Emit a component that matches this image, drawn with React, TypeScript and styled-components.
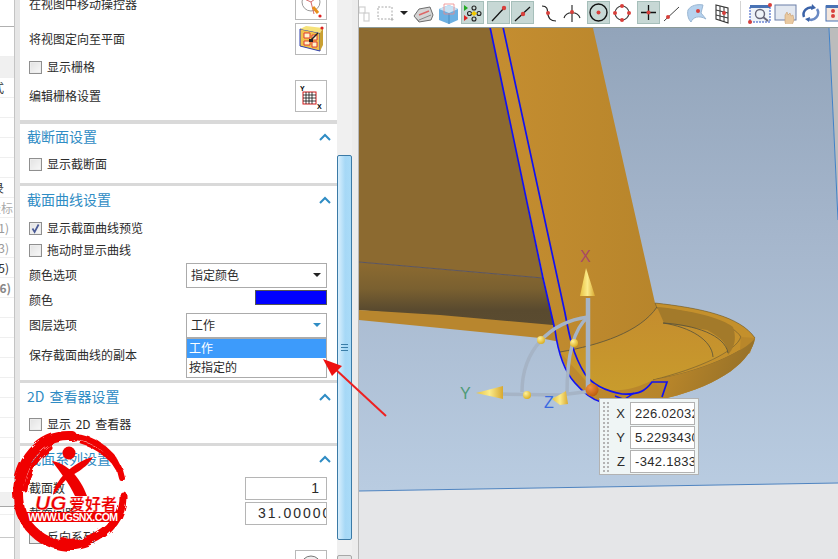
import React from 'react';
import styled, { createGlobalStyle } from 'styled-components';

const Global = createGlobalStyle`
  html, body { margin: 0; padding: 0; background: #e8e8e8; overflow: hidden; }
  * { box-sizing: border-box; }
`;

const Page = styled.div`
  position: relative;
  display: flex;
  width: 838px;
  height: 559px;
  overflow: hidden;
  background: #e8e8e8;
  font-family: "Noto Sans CJK SC", "Liberation Sans", sans-serif;
  font-size: 12px;
  word-spacing: 2px;
  color: #2b2b2b;
`;

/* clipped table at far left */
const Strip = styled.div`
  width: 15px;
  flex: none;
  background: #fff;
  border-right: 1px solid #c4c4c4;
  overflow: hidden;
`;
const StripRow = styled.div<{ $h: number; $bg?: string; $c?: string; $bold?: boolean; $line?: string; $pr?: number }>`
  height: ${(p) => p.$h}px;
  display: flex;
  justify-content: flex-end;
  align-items: center;
  padding-right: ${(p) => p.$pr || 0}px;
  white-space: nowrap;
  background: ${(p) => p.$bg || '#fff'};
  color: ${(p) => p.$c || '#333'};
  font-weight: ${(p) => (p.$bold ? 700 : 400)};
  border-bottom: 1px solid ${(p) => p.$line || '#efefef'};
`;
const StripGap = styled.div`
  width: 5px;
  flex: none;
  background: #e6e6e6;
`;

const Panel = styled.div`
  width: 317px;
  flex: none;
  height: 559px;
  background: #fff;
`;
const Section = styled.section<{ $first?: boolean; $pb: number; $bw?: number }>`
  position: relative;
  padding: 0 10px ${(p) => p.$pb}px 9px;
  margin-top: ${(p) => (p.$first ? -12 : 0)}px;
  border-bottom: ${(p) => p.$bw ?? 3}px solid #d9d9d9;
`;
const SectionHead = styled.div<{ $h: number }>`
  height: ${(p) => p.$h}px;
  display: flex;
  align-items: center;
  justify-content: space-between;
  margin-left: -2px;
  margin-right: -4px;
  font-size: 14px;
  color: #2f8cc4;
  & > span { margin-bottom: 2px; }
`;
const Row = styled.div<{ $h: number; $mt?: number }>`
  height: ${(p) => p.$h}px;
  margin-top: ${(p) => p.$mt || 0}px;
  display: flex;
  align-items: center;
  justify-content: space-between;
  white-space: nowrap;
  & > span { margin-bottom: 2px; }
`;
const CheckLabel = styled.div`
  display: flex;
  align-items: center;
  gap: 5px;
  & > em { font-style: normal; margin-bottom: 2px; }
`;
const Box = styled.span`
  width: 13px;
  height: 13px;
  flex: none;
  display: flex;
  border: 1px solid #8f8f8f;
  background: linear-gradient(135deg, #e2e2e2, #f8f8f8);
  box-shadow: inset 0 0 0 1px #ededed;
`;
const IconButton = styled.div`
  width: 32px;
  height: 32px;
  flex: none;
  display: flex;
  align-items: center;
  justify-content: center;
  border: 1px solid #b9b9b9;
  background: #fff;
  overflow: hidden;
`;
const Select = styled.div`
  position: relative;
  width: 141px;
  height: 25px;
  display: flex;
  align-items: center;
  justify-content: space-between;
  padding: 0 5px 2px 4px;
  border: 1px solid #ababab;
  background: #fff;
`;
const Caret = styled.span<{ $color: string }>`
  width: 0;
  height: 0;
  border-left: 4px solid transparent;
  border-right: 4px solid transparent;
  border-top: 4px solid ${(p) => p.$color};
`;
const Menu = styled.div`
  position: absolute;
  z-index: 3;
  top: 23px;
  left: -1px;
  width: 141px;
  height: 41px;
  background: #fff;
  border: 1px solid #ababab;
  border-top: 2px solid #ababab;
`;
const MenuItem = styled.div<{ $on?: boolean }>`
  height: 19px;
  line-height: 18px;
  padding-left: 2px;
  background: ${(p) => (p.$on ? '#3d9bfb' : '#fff')};
  color: ${(p) => (p.$on ? '#fff' : '#2b2b2b')};
`;
const Swatch = styled.div`
  width: 72px;
  height: 15px;
  margin-bottom: 6px;
  background: #0000ff;
  border: 1px solid #555;
`;
const NumField = styled.div`
  width: 82px;
  height: 23px;
  border: 1px solid #b5b5b5;
  background: #fff;
  font-family: "Liberation Sans", sans-serif;
  font-size: 14px;
  letter-spacing: 2px;
  line-height: 21px;
  overflow: hidden;
  white-space: nowrap;
`;
const NumRight = styled(NumField)`
  text-align: right;
  padding-right: 5px;
`;
const NumLeft = styled(NumField)`
  padding-left: 12px;
`;

/* scrollbar */
const ScrollTrack = styled.div`
  width: 15px;
  flex: none;
  background: #f0f0f0;
  display: flex;
  flex-direction: column;
  padding-top: 155px;
`;
const ScrollThumb = styled.div`
  height: 385px;
  flex: none;
  border: 1px solid #3b7aa6;
  border-radius: 2px;
  background: linear-gradient(90deg, #d9effd, #a6d8f6 55%, #a9dbf8);
  display: flex;
  align-items: center;
  justify-content: center;
`;
const ScrollGrip = styled.div`
  width: 7px;
  height: 7px;
  background: repeating-linear-gradient(180deg, #3a7ea8 0 1px, transparent 1px 3px);
`;
const ScrollEnd = styled.div`
  height: 10px;
  flex: none;
  margin-top: 15px;
  border: 1px solid #a8a8a8;
  background: #e4e4e4;
  border-radius: 2px;
`;
const Divider = styled.div`
  width: 7px;
  flex: none;
  background: #ececec;
  border-right: 1px solid #b8b8b8;
`;

/* right side */
const Work = styled.div`
  position: relative;
  flex: 1;
  display: flex;
  flex-direction: column;
  min-width: 0;
`;
const Toolbar = styled.div`
  height: 28px;
  flex: none;
  display: flex;
  align-items: flex-start;
  background: #fff;
  border-bottom: 1px solid #8c9a98;
  overflow: hidden;
`;
const Tool = styled.div<{ $w: number; $ml?: number; $on?: boolean }>`
  width: ${(p) => p.$w}px;
  height: 23px;
  flex: none;
  margin-top: 1px;
  margin-left: ${(p) => p.$ml || 0}px;
  display: flex;
  align-items: center;
  justify-content: center;
  background: ${(p) => (p.$on ? '#c7d8d5' : 'transparent')};
  border: ${(p) => (p.$on ? '1px solid #a6bfba' : 'none')};
`;
const ToolSep = styled.div`
  width: 1px;
  height: 23px;
  flex: none;
  margin: 1px 7px 0 7px;
  background: #d4d4d4;
`;
const Viewport = styled.svg`
  display: block;
  width: 479px;
  height: 531px;
`;
const CoordBox = styled.div`
  position: absolute;
  left: 240px;
  top: 398px;
  width: 100px;
  height: 77px;
  display: flex;
  background: #eff5f5;
  border: 1px solid #b2b2b2;
`;
const Grip = styled.div`
  width: 8px;
  margin: 2px 0 2px 2px;
  background-image: radial-gradient(circle, #b4b4b4 1.2px, transparent 1.3px);
  background-size: 4px 4px;
`;
const CoordRows = styled.div`
  flex: 1;
  display: flex;
  flex-direction: column;
  gap: 1px;
  padding: 3px 3px 0 0;
`;
const CoordRow = styled.div`
  display: flex;
  justify-content: flex-end;
  align-items: center;
  gap: 5px;
  font-family: "Liberation Sans", sans-serif;
  font-size: 13px;
`;
const CoordInput = styled.div`
  width: 65px;
  height: 23px;
  padding-left: 4px;
  line-height: 21px;
  background: #fff;
  border: 1px solid #b2b2b2;
  overflow: hidden;
  white-space: nowrap;
  letter-spacing: 0.3px;
`;

const Overlay = styled.svg`
  position: absolute;
  z-index: 5;
  left: 0;
  top: 0;
  pointer-events: none;
`;

const Chevron = () => (
  <svg width="12" height="8" viewBox="0 0 12 8"><path d="M1 7 6 2l5 5" fill="none" stroke="#2f8cc4" strokeWidth="2" /></svg>
);
const Tick = () => (
  <svg width="11" height="11" viewBox="0 0 11 11"><path d="M2.5 5.5 4.6 9 8.6 1.5" fill="none" stroke="#4a5a96" strokeWidth="1.7" /></svg>
);

const Check = ({ on, children }: { on?: boolean; children: React.ReactNode }) => (
  <CheckLabel><Box>{on && <Tick />}</Box><em>{children}</em></CheckLabel>
);

const RED = '#d8403c';
const Dot = ({ x, y, r = 2 }: { x: number; y: number; r?: number }) => <circle cx={x} cy={y} r={r} fill={RED} />;
const Ico = ({ children, w = 22, h = 22 }: { children: React.ReactNode; w?: number; h?: number }) => (
  <svg width={w} height={h} viewBox={`0 0 ${w} ${h}`}>{children}</svg>
);

const tools: { w: number; ml?: number; on?: boolean; icon?: React.ReactNode }[] = [
  { w: 15, icon: <Ico w={15}><g fill="none" stroke="#d0d0d0" strokeWidth="1.2"><rect x="0" y="5" width="6" height="6" /><rect x="5" y="11" width="5" height="8" /></g></Ico> },
  { w: 22, ml: 1, icon: <Ico><rect x="3" y="5" width="14" height="12" fill="none" stroke="#a8a8a8" strokeDasharray="2 1.5" /><path d="M17 16v3M15.500 17.500h3" stroke="#b8b8b8" /></Ico> },
  { w: 10, ml: 2, icon: <Ico w={10}><path d="M1 9h8l-4 4z" fill="#222" /></Ico> },
  { w: 24, ml: 2, icon: <Ico w={24}><path d="M3 14 8 7l11-2 3 8-2 5-12 2z" fill="#d4d4d4" stroke="#6e6e6e" /><path d="M8 13 18 9" stroke="#d66" strokeWidth="1.5" /><path d="M5 16l3 3M8 18l12-5" stroke="#888" fill="none" /></Ico> },
  { w: 23, ml: 2, icon: <Ico w={23}><path d="M2 7 12 3l9 4v11l-9 4-10-4z" fill="#6cb0e2" /><path d="M2 7l10 4 9-4-9-4z" fill="#c8e2f4" /><path d="M12 11v11" stroke="#4a8cc0" /><path d="M7 2h10v10H7z" fill="none" stroke="#e88" strokeWidth=".8" /></Ico> },
  { w: 23, ml: 1, on: true, icon: <Ico w={21}><path d="M2 3l4 3-4 3z" fill="#2a2" /><path d="M2 13l4 3-4 3z" fill="#d22" /><g fill="none" stroke="#222" strokeWidth="1.1"><circle cx="12" cy="6" r="2" /><circle cx="12" cy="17" r="2" /><circle cx="7.500" cy="11.500" r="2" /><circle cx="17" cy="11.500" r="2" /></g><path d="M12 9l3 2.500-3 2.500-3-2.500z" fill="#f0c800" /></Ico> },
  { w: 23, ml: 3, on: true, icon: <Ico w={21}><path d="M4 19 17 5" stroke="#111" strokeWidth="1.2" /><Dot x={16} y={6} r={2.2} /></Ico> },
  { w: 23, ml: 1, on: true, icon: <Ico w={21}><path d="M3 19 18 5" stroke="#111" strokeWidth="1.2" /><Dot x={11} y={12} r={2.2} /></Ico> },
  { w: 22, ml: 4, icon: <Ico><path d="M4 4c7 0 5 6 6 9s2 6 8 6" fill="none" stroke="#222" strokeWidth="1.2" /><Dot x={10} y={11} r={2} /></Ico> },
  { w: 22, ml: 1, icon: <Ico><path d="M3 16c2-7 14-7 16 0M11 3v17" fill="none" stroke="#222" strokeWidth="1.1" /><Dot x={11} y={10} r={2} /></Ico> },
  { w: 23, ml: 4, on: true, icon: <Ico w={21}><circle cx="10.500" cy="10.500" r="8.500" fill="none" stroke="#111" strokeWidth="1.4" /><Dot x={10.5} y={10.5} r={2} /></Ico> },
  { w: 22, ml: 1, icon: <Ico><circle cx="11" cy="11" r="7" fill="none" stroke="#444" strokeWidth="1.1" /><Dot x={11} y={4} /><Dot x={11} y={18} /><Dot x={4} y={11} /><Dot x={18} y={11} /></Ico> },
  { w: 23, ml: 4, on: true, icon: <Ico w={21}><path d="M3 10.500h15M10.500 3v15" stroke="#111" strokeWidth="1.3" /><Dot x={10.5} y={10.5} r={2} /></Ico> },
  { w: 22, ml: 1, icon: <Ico><path d="M3 19 18 5" stroke="#444" /><Dot x={7} y={15} r={2} /></Ico> },
  { w: 24, ml: 2, icon: <Ico w={24}><path d="M3 8c3-5 10-6 15-5l-2 8 5 6c-7-4-13-2-15 3-3-3-4-8-3-12z" fill="#b6d2ee" stroke="#9ab6d2" /><Dot x={13} y={9} r={2} /></Ico> },
  { w: 22, ml: 2, icon: <Ico><path d="M5 3l12 3v15L5 17z" fill="none" stroke="#333" strokeWidth="1.1" /><path d="M9 4v14M13 5v15M5 8l12 3M5 13l12 3" stroke="#333" /><Dot x={13} y={11} r={2} /></Ico> },
];
const tools2: { w: number; ml?: number; icon: React.ReactNode }[] = [
  { w: 24, icon: <Ico w={24}><rect x="2" y="4" width="20" height="16" fill="#eef3f8" stroke="#2a4fc0" strokeDasharray="2 1" /><rect x="2" y="3" width="20" height="3" fill="#4872b4" /><circle cx="12" cy="12" r="4.500" fill="none" stroke="#667" strokeWidth="1.4" /><path d="M15 15l5 4" stroke="#667" strokeWidth="2" /><Dot x={2} y={20} /><Dot x={22} y={3} /></Ico> },
  { w: 24, ml: 2, icon: <Ico w={24}><rect x="1" y="3" width="21" height="15" fill="#e3e8f0" stroke="#6b7fa8" /><path d="M11 20v-7l2-3 1 3 2-2 1 3 2-1 1 5-2 5h-6z" fill="#e9c9a0" stroke="#c9a070" strokeWidth=".6" /></Ico> },
  { w: 23, ml: 1, icon: <Ico w={23}><path d="M5 15a7 7 0 0 1 9-9" fill="none" stroke="#3b63a8" strokeWidth="2.500" /><path d="M18 7a7 7 0 0 1-9 10" fill="none" stroke="#6a8ac4" strokeWidth="2.500" /><path d="M13 2l4 4-5 2zM10 20l-4-3 5-2z" fill="#3b63a8" /></Ico> },
  { w: 15, ml: 3, icon: <Ico w={15}><rect x="1" y="4" width="20" height="15" fill="#f4e6dc" stroke="#4872b4" /><rect x="1" y="3" width="20" height="3" fill="#4872b4" /><Dot x={8} y={9} /><Dot x={8} y={14} /></Ico> },
];

const Strokes = () => (
  <g>
    <path d="M490 27 543 278 555 330C558 352 565 372 575 383 582 391 590 399 601 402 M503 27 565 313C569 335 573 355 585 374 592 384 606 391 622 394 640 395 646 390 652 382H667L662 397" fill="none" stroke="#1212f0" strokeWidth="1.700" />
    <path d="M615 396 628 401M622 401 634 393" fill="none" stroke="#1212f0" strokeWidth="1.500" />
  </g>
);

const Bell = () => (
  <>
    <defs>
      <linearGradient id="sky" x1="0" y1="28" x2="0" y2="490" gradientUnits="userSpaceOnUse">
        <stop offset="0" stopColor="#92a4ba" /><stop offset=".45" stopColor="#a5b6cc" /><stop offset="1" stopColor="#b9cce1" />
      </linearGradient>
      <linearGradient id="band" x1="0" y1="265" x2="0" y2="325" gradientUnits="userSpaceOnUse">
        <stop offset="0" stopColor="#8b6a30" /><stop offset=".4" stopColor="#7a6030" /><stop offset=".75" stopColor="#594a2f" /><stop offset="1" stopColor="#5a4b30" />
      </linearGradient>
      <linearGradient id="shaft" x1="500" y1="0" x2="660" y2="0" gradientUnits="userSpaceOnUse">
        <stop offset="0" stopColor="#c48d30" /><stop offset="1" stopColor="#b7852b" />
      </linearGradient>
      <linearGradient id="foot" x1="0" y1="310" x2="0" y2="400" gradientUnits="userSpaceOnUse">
        <stop offset="0" stopColor="#c48d2e" /><stop offset="1" stopColor="#c99d2c" />
      </linearGradient>
      <linearGradient id="under" x1="660" y1="350" x2="760" y2="390" gradientUnits="userSpaceOnUse">
        <stop offset="0" stopColor="#c08a2a" /><stop offset="1" stopColor="#8e6c28" />
      </linearGradient>
      <linearGradient id="cone" x1="0" y1="0" x2="1" y2="0">
        <stop offset="0" stopColor="#e8c240" /><stop offset=".5" stopColor="#fbeb8a" /><stop offset="1" stopColor="#d8a830" />
      </linearGradient>
      <radialGradient id="ball" cx=".35" cy=".3" r=".8">
        <stop offset="0" stopColor="#fff29a" /><stop offset="1" stopColor="#d8a818" />
      </radialGradient>
      <radialGradient id="ballO" cx=".35" cy=".3" r=".8">
        <stop offset="0" stopColor="#f09040" /><stop offset="1" stopColor="#b85808" />
      </radialGradient>
    </defs>
    <rect x="359" y="28" width="479" height="531" fill="#e5e6e8" />
    <path d="M359 28H829L838 220V483L359 491Z" fill="url(#sky)" />
    <path d="M829 28H838V220Z" fill="#bcbcbc" />
    <path d="M829 28 838 220" stroke="#3f80c8" fill="none" />
    <path d="M359 491 838 483" stroke="#4f84c0" strokeWidth="1" fill="none" />
    {/* body */}
    <path d="M359 28H490L543 278 359 262Z" fill="#8c6a30" />
    <path d="M359 262 543 278 557 330 490 322 359 310Z" fill="url(#band)" />
    <path d="M359 310 440 315 553 325 560 342 540 338 440 328 359 320Z" fill="#b8862e" />
    <path d="M359 262 543 278" stroke="#5b5560" fill="none" />
    {/* shaft and foot */}
    <path d="M490 28H593L655 303C700 308 740 316 755 338 752 360 722 385 667 398L600 402C575 390 562 370 555 330Z" fill="url(#shaft)" />
    <path d="M560 352C600 345 640 332 657 307 700 312 735 322 740 337 735 355 690 372 653 380 630 392 600 396 585 380Z" fill="url(#foot)" />
    <path d="M655 303C700 308 740 316 755 338 745 352 700 372 653 380 700 368 735 352 741 337 733 324 700 312 657 308Z" fill="#c4902c" stroke="#6b5a30" strokeWidth=".6" />
    <path d="M741 337 755 338 750 353 727 366 740 350Z" fill="#b9872a" />
    <path d="M653 380C700 372 745 352 755 338 752 360 722 385 667 398Z" fill="url(#under)" />
    <path d="M733 327C722 318 690 310 657 307L664 323 707 330C722 338 728 345 728 355 732 350 738 342 733 327Z" fill="#a37a2a" />
    <path d="M663 323C690 327 712 340 713 357M663 323C695 325 725 335 728 353M560 352C600 345 640 332 657 307" fill="none" stroke="#54503c" strokeWidth=".8" />
    <Strokes />
    {/* manipulator */}
    <g fill="none" stroke="#a6b4c6">
      <path d="M588 317C550 322 522 350 522 392" strokeWidth="3.500" />
      <path d="M588 317C572 330 567 360 567 394" strokeWidth="3.500" />
      <path d="M588 298V390" strokeWidth="4.500" />
      <path d="M592 391 560 395 500 394" strokeWidth="3.500" />
    </g>
    <path d="M586 268 595 296H580Z" fill="url(#cone)" />
    <path d="M476 393 503 386V399Z" fill="url(#cone)" />
    <path d="M552 399 566 391 568 404 560 405Z" fill="url(#cone)" />
    <circle cx="541" cy="340" r="4" fill="url(#ball)" />
    <circle cx="574" cy="343" r="4" fill="url(#ball)" />
    <circle cx="527" cy="395" r="4" fill="url(#ball)" />
    <circle cx="592" cy="390" r="6.500" fill="url(#ballO)" />
    <g fontFamily="Liberation Sans, sans-serif" fontSize="16">
      <text x="580" y="262" fill="#a84a66">X</text>
      <text x="460" y="399" fill="#4e9a76">Y</text>
      <text x="544" y="408" fill="#3a6ae0">Z</text>
    </g>
  </>
);

const Watermark = () => (
  <Overlay width="140" height="559" viewBox="0 0 140 559">
    <defs>
      <filter id="rough" x="-10%" y="-10%" width="120%" height="120%">
        <feTurbulence type="fractalNoise" baseFrequency="0.09" numOctaves="2" seed="4" />
        <feDisplacementMap in="SourceGraphic" scale="6" />
      </filter>
    </defs>
    <g filter="url(#rough)" fill="none" stroke="#f00000" strokeLinecap="round">
      <path d="M72 436C40 434 18 462 18 494 18 525 42 546 72 546" strokeWidth="10" />
      <path d="M70 437C95 436 118 455 122 478" strokeWidth="6" />
      <path d="M123 495C124 520 104 542 72 546" strokeWidth="7" />
      <path d="M50 448C35 458 27 472 25 490" strokeWidth="5" />
      <path d="M62 541C85 545 105 532 112 522" strokeWidth="4" />
      <path d="M82 443C100 448 112 460 118 470" strokeWidth="3" />
    </g>
    <circle cx="69" cy="453" r="6.500" fill="#ee0000" />
    <path d="M52 461C66 463 80 476 87 496L75 496C69 483 60 472 52 461Z" fill="#ee0000" />
    <path d="M93 457C84 472 70 474 63 483 59 488 56 492 53 495 54 482 72 462 93 457Z" fill="#ee0000" />
    <rect x="26" y="512" width="92" height="10" fill="#ee0000" />
    <text x="35" y="510" fill="#ee0000" stroke="#fff" strokeWidth=".3" fontFamily="Liberation Sans, sans-serif" fontWeight="700" fontStyle="italic" fontSize="21">UG</text>
    <text x="69" y="510" fill="#ee0000" stroke="#fff" strokeWidth=".2" fontFamily="Noto Sans CJK SC, sans-serif" fontWeight="700" fontSize="16">爱好者</text>
    <text x="28" y="521" fill="#fff" fontFamily="Liberation Sans, sans-serif" fontWeight="700" fontSize="10.500" textLength="90">WWW.UGSNX.COM</text>
  </Overlay>
);

const Arrow = () => (
  <Overlay width="420" height="440" viewBox="0 0 420 440">
    <path d="M386 416 333 367" stroke="#ee2020" strokeWidth="2" fill="none" />
    <path d="M323 359 342 366 332 376Z" fill="#ee1010" />
  </Overlay>
);

const plain = { h: 20 };
const stripRows: { h: number; t?: string; bg?: string; c?: string; bold?: boolean; line?: string; pr?: number }[] = [
  { h: 27, line: '#b0b0b0' }, { h: 30 }, { h: 21, bg: '#f0f0f0' },
  { h: 20, t: '式', pr: 10 }, plain, plain, plain, plain,
  { h: 20, t: '录', pr: 10 },
  { h: 20, t: '坐标', c: '#aaa', pr: 1 }, { h: 20, t: '1)', c: '#999', pr: 5 }, { h: 20, t: '3)', c: '#999', pr: 5 },
  { h: 20, t: '5)', pr: 5 }, { h: 20, t: '(6)', c: '#888', bold: true, pr: 3 },
  plain, plain, plain, plain, plain, plain, plain, plain, plain,
  { h: 15 }, { h: 14, bg: '#f0f0f0', line: '#a8a8a8' }, { h: 8 }, { h: 23, line: '#c8c8c8' },
];

export default function App() {
  return (
    <Page>
      <Global />
      <Strip>
        {stripRows.map((r, i) => (
          <StripRow key={i} $h={r.h} $bg={r.bg} $c={r.c} $bold={r.bold} $line={r.line} $pr={r.pr}>{r.t}</StripRow>
        ))}
      </Strip>
      <StripGap />
      <Panel>
        <Section $first $pb={8} $bw={4}>
          <Row $h={32}>
            <span>在视图中移动操控器</span>
            <IconButton>
              <svg width="30" height="30" viewBox="0 0 30 30">
                <circle cx="15" cy="13" r="9" fill="none" stroke="#9a9a9a" />
                <path d="M4 8 15 13 24 6M15 13l3 12" stroke="#d46a6a" fill="none" />
                <path d="M17 18 22 24" stroke="#e8901c" strokeWidth="3" />
                <circle cx="24" cy="27" r="1.600" fill="#d22" />
              </svg>
            </IconButton>
          </Row>
          <Row $h={32} $mt={3}>
            <span>将视图定向至平面</span>
            <IconButton>
              <svg width="30" height="30" viewBox="0 0 30 30">
                <path d="M4 5 24 9V27L4 22Z" fill="#f1c24a" stroke="#2c3fb0" />
                <path d="M4 5 10 2 27 4 24 9Z" fill="#f6e27a" />
                <path d="M24 9 27 4V21L24 27Z" fill="#c9a032" />
                <path d="M8 9h6v5H8zM16 11h5v5h-5zM8 17h6v4H8zM16 18h5v5h-5z" fill="#fff3c8" stroke="#e03a30" />
                <path d="M15 16 22 9" stroke="#222" strokeWidth="1.500" />
                <path d="M13 15h4v3h-4z" fill="#222" />
                <circle cx="26" cy="4" r="1.600" fill="#d22" />
              </svg>
            </IconButton>
          </Row>
          <Row $h={25}><Check>显示栅格</Check></Row>
          <Row $h={32}>
            <span>编辑栅格设置</span>
            <IconButton>
              <svg width="30" height="30" viewBox="0 0 30 30">
                <rect x="7" y="11" width="13" height="12" fill="#fff" stroke="#d01818" />
                <path d="M7 14h13M7 17h13M7 20h13M10 11v12M13 11v12M16 11v12" stroke="#111" strokeWidth=".8" />
                <text x="4" y="10" fontSize="7" fontWeight="700" fontFamily="Liberation Sans, sans-serif">Y</text>
                <text x="21" y="28" fontSize="7" fontWeight="700" fontFamily="Liberation Sans, sans-serif">X</text>
              </svg>
            </IconButton>
          </Row>
        </Section>

        <Section $pb={5}>
          <SectionHead $h={26}><span>截断面设置</span><Chevron /></SectionHead>
          <Row $h={28}><Check>显示截断面</Check></Row>
        </Section>

        <Section $pb={8}>
          <SectionHead $h={28}><span>截面曲线设置</span><Chevron /></SectionHead>
          <Row $h={22} $mt={3}><Check on>显示截面曲线预览</Check></Row>
          <Row $h={22}><Check>拖动时显示曲线</Check></Row>
          <Row $h={25} $mt={2}>
            <span>颜色选项</span>
            <Select>指定颜色<Caret $color="#222" /></Select>
          </Row>
          <Row $h={24}><span>颜色</span><Swatch /></Row>
          <Row $h={25} $mt={1}>
            <span>图层选项</span>
            <Select>
              工作<Caret $color="#2f8cc4" />
              <Menu>
                <MenuItem $on>工作</MenuItem>
                <MenuItem>按指定的</MenuItem>
              </Menu>
            </Select>
          </Row>
          <Row $h={34}><span>保存截面曲线的副本</span></Row>
        </Section>

        <Section $pb={6}>
          <SectionHead $h={28}><span>2D 查看器设置</span><Chevron /></SectionHead>
          <Row $h={26}><Check>显示 2D 查看器</Check></Row>
        </Section>

        <Section $pb={0} $bw={0}>
          <SectionHead $h={26}><span>截面系列设置</span><Chevron /></SectionHead>
          <Row $h={23} $mt={5}><span>截面数</span><NumRight>1</NumRight></Row>
          <Row $h={23} $mt={2}><span>截面间距</span><NumLeft>31.00000</NumLeft></Row>
          <Row $h={24}><Check>反向系列</Check></Row>
          <Row $h={32} $mt={1}>
            <span />
            <IconButton>
              <svg width="30" height="30" viewBox="0 0 30 30"><circle cx="15" cy="15" r="10" fill="#eee" stroke="#777" /></svg>
            </IconButton>
          </Row>
        </Section>
      </Panel>
      <ScrollTrack>
        <ScrollThumb><ScrollGrip /></ScrollThumb>
        <ScrollEnd />
      </ScrollTrack>
      <Divider />
      <Work>
        <Toolbar>
          {tools.map((t, i) => (
            <Tool key={i} $w={t.w} $ml={t.ml} $on={t.on}>{t.icon}</Tool>
          ))}
          <ToolSep />
          {tools2.map((t, i) => (
            <Tool key={i} $w={t.w} $ml={t.ml}>{t.icon}</Tool>
          ))}
        </Toolbar>
        <Viewport viewBox="359 28 479 531"><Bell /></Viewport>
        <CoordBox>
          <Grip />
          <CoordRows>
            <CoordRow>X<CoordInput>226.02032</CoordInput></CoordRow>
            <CoordRow>Y<CoordInput>5.2293430</CoordInput></CoordRow>
            <CoordRow>Z<CoordInput>-342.1833</CoordInput></CoordRow>
          </CoordRows>
        </CoordBox>
      </Work>
      <Arrow />
      <Watermark />
    </Page>
  );
}
